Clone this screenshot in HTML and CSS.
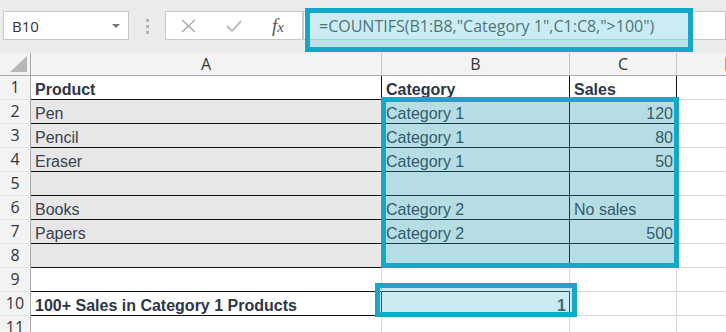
FILE: index.html
```html
<!DOCTYPE html>
<html lang="en">

<head>
    <meta charset="UTF-8">
    <meta name="viewport" content="width=device-width, initial-scale=1.0">
    <title>COUNTIFS</title>
    <link rel="stylesheet" href="styles.css">
</head>

<body>
    <div class="app">
        <!-- Name box + formula bar -->
        <div class="toolbar">
            <div class="name-box">
                <span>B10</span>
                <span class="caret"></span>
            </div>
            <div class="grip"><i></i><i></i><i></i></div>
            <div class="fx-buttons">
                <span class="btn btn-cancel">
                    <svg width="15" height="14" viewBox="0 0 15 14">
                        <path d="M1 1 L14 13 M14 1 L1 13" stroke="#a9a9a9" stroke-width="1.4" fill="none" />
                    </svg>
                </span>
                <span class="btn btn-enter">
                    <svg width="16" height="12" viewBox="0 0 16 12">
                        <path d="M1 6 L6 11 L15 1" stroke="#bdbdbd" stroke-width="2" fill="none" />
                    </svg>
                </span>
                <span class="btn btn-fx"><span class="f">f</span><span class="x">x</span></span>
            </div>
            <div class="formula-bar">=COUNTIFS(B1:B8,"Category 1",C1:C8,"&gt;100")</div>
        </div>

        <!-- Worksheet -->
        <div class="sheet">
            <div class="corner"><span class="corner-tri"></span></div>
            <div class="ch">A</div>
            <div class="ch">B</div>
            <div class="ch">C</div>
            <div class="ch ch-d">D</div>

            <div class="rh">1</div>
            <div class="c bold bb br">Product</div>
            <div class="c bold bb br">Category</div>
            <div class="c bold bb br">Sales</div>
            <div class="c"></div>

            <div class="rh">2</div>
            <div class="c gray bb br">Pen</div>
            <div class="c bb br">Category 1</div>
            <div class="c num bb br">120</div>
            <div class="c"></div>

            <div class="rh">3</div>
            <div class="c gray bb br">Pencil</div>
            <div class="c bb br">Category 1</div>
            <div class="c num bb br">80</div>
            <div class="c"></div>

            <div class="rh">4</div>
            <div class="c gray bb br">Eraser</div>
            <div class="c bb br">Category 1</div>
            <div class="c num bb br">50</div>
            <div class="c"></div>

            <div class="rh">5</div>
            <div class="c gray bb br"></div>
            <div class="c bb br"></div>
            <div class="c bb br"></div>
            <div class="c"></div>

            <div class="rh">6</div>
            <div class="c gray bb br">Books</div>
            <div class="c bb br">Category 2</div>
            <div class="c bb br">No sales</div>
            <div class="c"></div>

            <div class="rh">7</div>
            <div class="c gray bb br">Papers</div>
            <div class="c bb br">Category 2</div>
            <div class="c num bb br">500</div>
            <div class="c"></div>

            <div class="rh">8</div>
            <div class="c gray bb br"></div>
            <div class="c bb br"></div>
            <div class="c bb br"></div>
            <div class="c"></div>

            <div class="rh">9</div>
            <div class="c bb"></div>
            <div class="c bb"></div>
            <div class="c"></div>
            <div class="c"></div>

            <div class="rh">10</div>
            <div class="c bold bb br">100+ Sales in Category 1 Products</div>
            <div class="c bold num bb br">1</div>
            <div class="c"></div>
            <div class="c"></div>

            <div class="rh">11</div>
            <div class="c"></div>
            <div class="c"></div>
            <div class="c"></div>
            <div class="c"></div>
        </div>

        <!-- Highlight boxes drawn over the sheet -->
        <div class="mark mark-formula"></div>
        <div class="mark mark-range"></div>
        <div class="mark mark-cell"></div>
    </div>
</body>

</html>
```

FILE: styles.css
```css
body {
    margin: 0;
    padding: 0;
    background-color: white;
}

.app {
    position: relative;
    width: 726px;
    height: 332px;
    overflow: hidden;
    background-color: white;
}

/* ---------- toolbar ---------- */

.toolbar {
    display: flex;
    align-items: flex-start;
    height: 53px;
    padding: 11px 0 0 3px;
    box-sizing: border-box;
    background-color: #ebebeb;
    font-family: "Open Sans", sans-serif;
    color: #333;
}

.name-box {
    display: flex;
    align-items: center;
    justify-content: space-between;
    width: 126px;
    height: 29px;
    padding: 0 8px 0 8px;
    box-sizing: border-box;
    background-color: white;
    border: 1px solid #c8c8c8;
    font-size: 15px;
}

.caret {
    width: 0;
    height: 0;
    border-left: 4px solid transparent;
    border-right: 4px solid transparent;
    border-top: 4px solid #777;
}

.grip {
    display: flex;
    flex-direction: column;
    gap: 3px;
    margin: 8px 0 0 17px;
}

.grip i {
    display: block;
    width: 3px;
    height: 3px;
    background-color: #b3b3b3;
}

.fx-buttons {
    display: flex;
    align-items: center;
    margin-left: 16px;
    width: 138px;
    height: 29px;
    box-sizing: border-box;
    background-color: white;
    border: 1px solid #c8c8c8;
}

.btn {
    display: flex;
    align-items: center;
    justify-content: center;
    height: 100%;
}

.btn-cancel {
    width: 45px;
}

.btn-enter {
    width: 46px;
}

.btn-fx {
    width: 42px;
    font-family: "Liberation Serif", serif;
    font-style: italic;
    color: #555;
}

.btn-fx .f {
    font-size: 19px;
}

.btn-fx .x {
    font-size: 15px;
    margin-top: 4px;
}

.formula-bar {
    flex: 1;
    height: 29px;
    padding: 1px 0 0 15px;
    box-sizing: border-box;
    background-color: white;
    border: 1px solid #c8c8c8;
    font-size: 16px;
    line-height: 27px;
    white-space: nowrap;
}

/* ---------- sheet ---------- */

.sheet {
    display: grid;
    grid-template-columns: 31px 351px 188px 107px 106px;
    grid-template-rows: 23px repeat(11, 24px);
}

.sheet > div {
    box-sizing: border-box;
}

.corner,
.ch,
.rh {
    background-color: #f3f3f3;
    font-family: "Open Sans", sans-serif;
    font-size: 16px;
    color: #333;
}

.corner {
    position: relative;
    border-right: 1px solid #ababab;
    border-bottom: 1px solid #ababab;
}

.corner-tri {
    position: absolute;
    right: 3px;
    bottom: 3px;
    width: 0;
    height: 0;
    border-left: 17px solid transparent;
    border-bottom: 16px solid #b7b7b7;
}

.ch {
    text-align: center;
    line-height: 22px;
    border-right: 1px solid #c6c6c6;
    border-bottom: 1px solid #ababab;
}

.ch-d {
    color: #c48a3e;
}

.rh {
    text-align: center;
    line-height: 23px;
    border-right: 1px solid #ababab;
    border-bottom: 1px solid #e4e4e4;
}

.c {
    padding: 5px 3px 0 4px;
    font-family: "Liberation Sans", Arial, sans-serif;
    font-size: 16px;
    line-height: 18px;
    color: #38414f;
    white-space: nowrap;
    overflow: hidden;
    border-right: 1px solid #d9d9d9;
    border-bottom: 1px solid #d9d9d9;
}

.gray {
    background-color: #e7e7e7;
}

.bold {
    font-weight: bold;
    color: #2c3648;
}

.num {
    text-align: right;
}

.sheet > .bb {
    border-bottom-color: #111;
}

.sheet > .br {
    border-right-color: #111;
}

/* ---------- highlight boxes ---------- */

.mark {
    position: absolute;
    box-sizing: border-box;
    border: 5px solid #15a7c7;
    pointer-events: none;
}

.mark-formula {
    left: 305px;
    top: 8px;
    width: 388px;
    height: 44px;
    background-color: rgba(120, 210, 225, 0.4);
}

.mark-range {
    left: 381px;
    top: 97px;
    width: 298px;
    height: 171px;
    background-color: rgba(30, 150, 170, 0.32);
}

.mark-cell {
    left: 375px;
    top: 283px;
    width: 202px;
    height: 34px;
    background-color: rgba(100, 200, 220, 0.35);
}
```
